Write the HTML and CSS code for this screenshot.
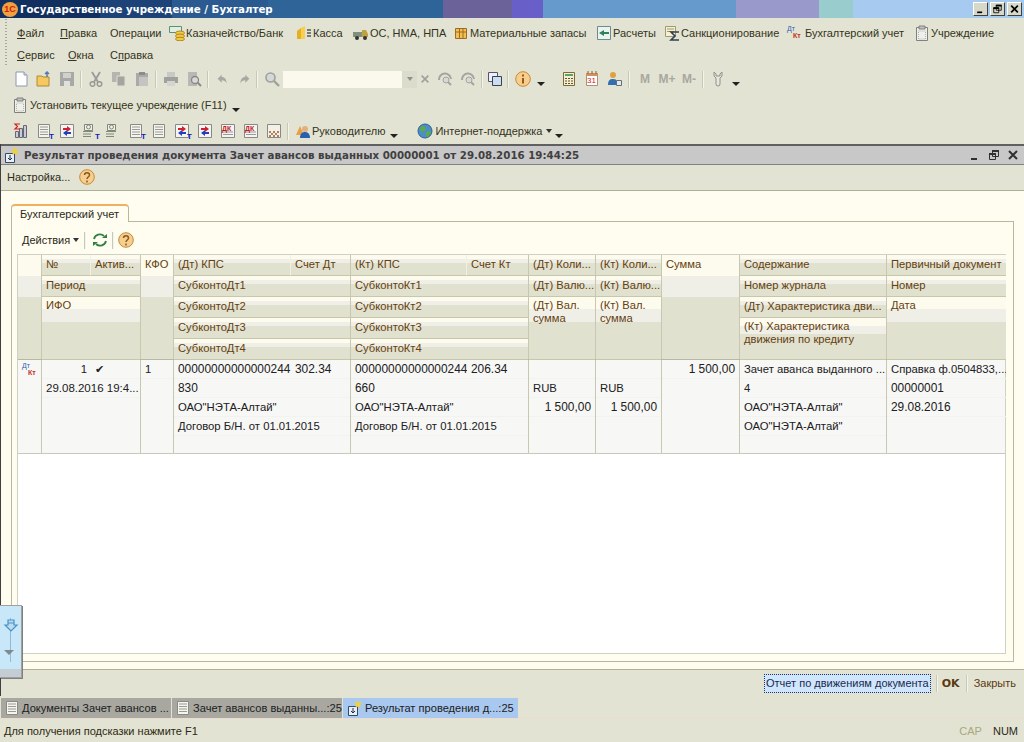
FILE: index.html
```html
<!DOCTYPE html>
<html lang="ru">
<head>
    <meta charset="UTF-8">
    <title>Государственное учреждение / Бухгалтер</title>
    <link rel="stylesheet" href="styles.css">
</head>
<body>
    <svg class="defs" width="0" height="0">
        <symbol id="doc" viewBox="0 0 16 16"><path d="M3 1h8l3 3v11H3z" fill="#fff" stroke="#8a9ab0"/><path d="M11 1v3h3" fill="#dde" stroke="#8a9ab0"/></symbol>
        <symbol id="lines" viewBox="0 0 16 16"><path d="M2.500 1.500h11v13h-11z" fill="#f4f4f0" stroke="#8a8a80"/><path d="M4 4h8M4 6.500h8M4 9h8M4 11.500h8" stroke="#9a9a90"/></symbol>
        <symbol id="open" viewBox="0 0 16 16"><path d="M1 5h5l1 1h6v9H1z" fill="#f5c860" stroke="#b08a30"/><path d="M11 6V1M9 3l2-2 2 2" fill="none" stroke="#5a7ab0" stroke-width="1.500"/></symbol>
        <symbol id="save" viewBox="0 0 16 16"><path d="M1 1h14v14H1z" fill="#a8a8a4"/><path d="M4 2h8v5H4z" fill="#d0d0cc"/><path d="M5 10h6v5H5z" fill="#e0e0dc"/></symbol>
        <symbol id="cut" viewBox="0 0 16 16"><path d="M4 1l6 10M12 1L6 11" stroke="#9a9a98" stroke-width="1.800" fill="none"/><circle cx="4.500" cy="13" r="2.300" fill="none" stroke="#9a9a98" stroke-width="1.500"/><circle cx="11.500" cy="13" r="2.300" fill="none" stroke="#9a9a98" stroke-width="1.500"/></symbol>
        <symbol id="copy" viewBox="0 0 16 16"><path d="M1 1h8v10H1z" fill="#b4b4b0"/><path d="M6 5h8v10H6z" fill="#a4a4a0" stroke="#e0e0d0"/></symbol>
        <symbol id="paste" viewBox="0 0 16 16"><path d="M2 2h12v13H2z" fill="#aaa" /><path d="M5 1h6v3H5z" fill="#8c8c8c"/><path d="M5 6h9v9H5z" fill="#c4c4c0"/></symbol>
        <symbol id="print" viewBox="0 0 16 16"><path d="M4 1h8v5H4z" fill="#c8c8c4"/><path d="M1 6h14v6H1z" fill="#a0a09c"/><path d="M4 10h8v5H4z" fill="#d4d4d0"/></symbol>
        <symbol id="preview" viewBox="0 0 16 16"><path d="M2 1h9v14H2z" fill="#b8b8b4"/><circle cx="9" cy="9" r="3.500" fill="#d8d8d4" stroke="#888" stroke-width="1.300"/><path d="M11.500 11.500L15 15" stroke="#888" stroke-width="2"/></symbol>
        <symbol id="undo" viewBox="0 0 16 16"><path d="M2 7l5-5v3c4 0 6 3 6 8-1-3-3-4-6-4v3z" fill="#a8a8a4"/></symbol>
        <symbol id="redo" viewBox="0 0 16 16"><path d="M14 7L9 2v3c-4 0-6 3-6 8 1-3 3-4 6-4v3z" fill="#a8a8a4"/></symbol>
        <symbol id="find" viewBox="0 0 16 16"><circle cx="6.500" cy="6.500" r="4.500" fill="#d4d8d8" stroke="#a0a09c" stroke-width="1.600"/><path d="M10 10l5 5" stroke="#a0a09c" stroke-width="2.400"/></symbol>
        <symbol id="findback" viewBox="0 0 16 16"><path d="M2 9a6 6 0 0 1 12-1" fill="none" stroke="#a4a4a0" stroke-width="2"/><circle cx="9" cy="9" r="3" fill="#d8d8d4" stroke="#a4a4a0"/><path d="M11 11l3 3" stroke="#a4a4a0" stroke-width="2"/></symbol>
        <symbol id="windows" viewBox="0 0 16 16"><path d="M1.500 1.500h9v9h-9z" fill="#eef" stroke="#556"/><path d="M5.500 5.500h9v9h-9z" fill="#cdddf0" stroke="#345"/></symbol>
        <symbol id="info" viewBox="0 0 16 16"><circle cx="8" cy="8" r="7.300" fill="#f6cf90" stroke="#c88a30"/><path d="M8 3.500v2M8 7v5.500" stroke="#a05a10" stroke-width="2"/></symbol>
        <symbol id="help" viewBox="0 0 16 16"><circle cx="8" cy="8" r="7.300" fill="#f6cf90" stroke="#c88a30"/><path d="M5.500 6c0-3 5-3 5 0 0 2-2.500 2-2.500 4M8 11.500v2" fill="none" stroke="#8a5a20" stroke-width="1.500"/></symbol>
        <symbol id="calc" viewBox="0 0 16 16"><path d="M2.500 1.500h11v13h-11z" fill="#eef0d8" stroke="#806a30"/><path d="M4 3h8v2H4z" fill="#60a060"/><path d="M4 7h2v1H4zM7 7h2v1H7zM10 7h2v1h-2zM4 9.500h2v1H4zM7 9.500h2v1H7zM10 9.500h2v1h-2zM4 12h2v1H4zM7 12h2v1H7zM10 12h2v1h-2z" fill="#705020"/></symbol>
        <symbol id="date" viewBox="0 0 16 16"><path d="M2.500 2.500h11v12h-11z" fill="#fff" stroke="#b09070"/><path d="M2 2h12v3H2z" fill="#d09060"/><path d="M4 0v3M8 0v3M12 0v3" stroke="#806040"/></symbol>
        <symbol id="users" viewBox="0 0 16 16"><circle cx="6" cy="4" r="3" fill="#e0a040"/><path d="M1 14c0-5 2-6 5-6s4 1 4 3v3z" fill="#3070b0"/><path d="M9.500 9.500h5v5h-5z" fill="#e4e8ec" stroke="#607080"/></symbol>
        <symbol id="person" viewBox="0 0 16 16"><path d="M2.500 1.500h8v6h-8z" fill="#f0f0ea" stroke="#808878"/><circle cx="6.500" cy="4" r="2" fill="none" stroke="#808878"/><path d="M1 8.500h10M1 11h8M1 13.500h8" stroke="#808878"/></symbol>
        <symbol id="tool" viewBox="0 0 16 16"><path d="M4 1v4l2 2v6a2 2 0 0 0 4 0V7l2-2V1l-2 2v2H6V3z" fill="#e8e8e0" stroke="#909088"/></symbol>
        <symbol id="clip" viewBox="0 0 16 16"><path d="M2.500 2.500h11v13h-11z" fill="#f0f0ea" stroke="#808080"/><path d="M5 1h6v3H5z" fill="#c0c0c0" stroke="#808080"/><path d="M4.500 6h7v8h-7z" fill="none" stroke="#b0b0a8" stroke-dasharray="1 1"/></symbol>
        <symbol id="bank" viewBox="0 0 16 16"><path d="M.5 1.500h12v6H.5z" fill="#dfeee0" stroke="#58907a"/><ellipse cx="11" cy="8" rx="4.500" ry="2" fill="#f4c840" stroke="#b08a20"/><ellipse cx="11" cy="11" rx="4.500" ry="2" fill="#f4c840" stroke="#b08a20"/><ellipse cx="11" cy="14" rx="4.500" ry="1.800" fill="#f4c840" stroke="#b08a20"/></symbol>
        <symbol id="cash" viewBox="0 0 16 16"><path d="M1 6l4-3v11H1z" fill="#e8b020"/><path d="M5 3l4-2v13H5z" fill="#f4d050"/><path d="M11 5h4M11 8h4M11 11h4" stroke="#555" stroke-width="1.400"/></symbol>
        <symbol id="truck" viewBox="0 0 16 16"><path d="M0 7h9v5H0z" fill="#80907c"/><path d="M9 5h4l2 4v3H9z" fill="#c0a040"/><circle cx="4" cy="13" r="2" fill="#333"/><circle cx="12" cy="13" r="2" fill="#333"/></symbol>
        <symbol id="box" viewBox="0 0 16 16"><path d="M2.500 3.500h11v10h-11z" fill="#f0c050" stroke="#a06a20"/><path d="M2.500 7h11M6.500 3.500v10M10 3.500v10" stroke="#a06a20"/></symbol>
        <symbol id="pay" viewBox="0 0 16 16"><path d="M1.500 1.500h13v13h-13z" fill="#e8f4f0" stroke="#708890"/><path d="M3 8l5-3v2h5v2H8v2z" fill="#30805a"/></symbol>
        <symbol id="sigma" viewBox="0 0 16 16"><path d="M1.500 1.500h10v10h-10z" fill="#f4f0d0" stroke="#a09a70"/><path d="M3 4h7M3 6.500h7" stroke="#a09a70"/><path d="M15 7H7l4 4-4 4h8" fill="none" stroke="#304050" stroke-width="1.600"/></symbol>
        <symbol id="boss" viewBox="0 0 16 16"><path d="M1 12l4-9 4 9z" fill="#e8a040"/><circle cx="10" cy="6" r="3" fill="#e0b080"/><path d="M5 15c0-4 2-6 5-6s5 2 5 6z" fill="#2860b0"/></symbol>
        <symbol id="globe" viewBox="0 0 16 16"><circle cx="8" cy="8" r="7" fill="#4a90c8" stroke="#30608a"/><path d="M3 4l4-1 2 3-3 3-3-2zM9 9l4-1 1 2-3 4-2-1z" fill="#60a848"/></symbol>
        <symbol id="docarrow" viewBox="0 0 16 16"><path d="M2.500 6.500h9v9h-9z" fill="#e8eef6" stroke="#354a66"/><path d="M7 8v5M5 11l2 2 2-2" fill="none" stroke="#203048"/><path d="M12 0l1 2.500 3 .5-2 2 .5 3-2.500-1.500L9.500 8l.5-3-2-2 3-.5z" fill="#f0d040"/></symbol>
        <symbol id="refresh" viewBox="0 0 16 16"><path d="M2 7a6 6 0 0 1 10-3M14 9a6 6 0 0 1-10 3" fill="none" stroke="#308040" stroke-width="1.800"/><path d="M10 6h5V2zM6 10H1v4z" fill="#308040"/></symbol>
        <symbol id="stat" viewBox="0 0 16 16"><path d="M2.500 8.500h3v6h-3zM6.500 5.500h3v9h-3zM10.500 2.500h3v12h-3z" fill="#c8ccd4" stroke="#667"/><path d="M7 1H2l2.500 2.500L2 6h5" fill="none" stroke="#d02020" stroke-width="1.200"/></symbol>
        <symbol id="move" viewBox="0 0 16 16"><path d="M1.500 1.500h13v13h-13z" fill="#f4f4f0" stroke="#888"/><path d="M8 3l4 3-4 3V7H4V5h4z" fill="#d02030"/><path d="M8 7l-4 3 4 3v-2h4V9H8z" fill="#2040c0"/></symbol>
        <symbol id="sheet" viewBox="0 0 16 16"><path d="M1.500 1.500h13v13h-13z" fill="#f4f4f0" stroke="#888"/><path d="M3 9h10M3 11.500h10" stroke="#999"/></symbol>
        <symbol id="chess" viewBox="0 0 16 16"><path d="M1.500 1.500h13v13h-13z" fill="#f4f0e4" stroke="#888"/><path d="M3 8h2v2H3zM7 8h2v2H7zM11 8h2v2h-2zM5 10h2v2H5zM9 10h2v2H9zM3 12h2v2H3zM7 12h2v2H7zM11 12h2v2h-2z" fill="#b08060"/></symbol>
        <symbol id="bookmark" viewBox="0 0 16 16"><path d="M5 2h6v5h3l-6 6-6-6h3z" fill="#bcdcf4" stroke="#4a90c4" stroke-width="1.200"/><path d="M5 5h6" stroke="#4a90c4"/></symbol>
        <symbol id="w-min" viewBox="0 0 12 12"><path d="M2 9h6v2H2z" fill="currentColor"/></symbol>
        <symbol id="w-max" viewBox="0 0 12 12"><path d="M4.500 1.500h6v6h-6zM1.500 4.500h6v6h-6z" fill="none" stroke="currentColor"/><path d="M4 1h7v2H4zM1 4h7v2H1z" fill="currentColor"/></symbol>
        <symbol id="w-close" viewBox="0 0 12 12"><path d="M2 2l8 8M10 2l-8 8" stroke="currentColor" stroke-width="2"/></symbol>
    </svg>

    <header class="app-title">
        <span class="logo">1С</span>
        <span class="app-name">Государственное учреждение / Бухгалтер</span>
        <div class="win-btns">
            <span class="win-btn"><svg><use href="#w-min"/></svg></span>
            <span class="win-btn"><svg><use href="#w-max"/></svg></span>
            <span class="win-btn"><svg><use href="#w-close"/></svg></span>
        </div>
    </header>

    <nav class="menubar">
        <div class="menu-row">
            <span class="m m-file"><u>Ф</u>айл</span>
            <span class="m m-edit"><u>П</u>равка</span>
            <span class="m m-ops">Операции</span>
            <span class="m m-bank"><svg class="i"><use href="#bank"/></svg>Казначейство/Банк</span>
            <span class="m m-cash"><svg class="i"><use href="#cash"/></svg>Касса</span>
            <span class="m m-os"><svg class="i"><use href="#truck"/></svg>ОС, НМА, НПА</span>
            <span class="m m-mat"><svg class="i"><use href="#box"/></svg>Материальные запасы</span>
            <span class="m m-pay"><svg class="i"><use href="#pay"/></svg>Расчеты</span>
            <span class="m m-san"><svg class="i"><use href="#sigma"/></svg>Санкционирование</span>
            <span class="m m-acc"><span class="dtkt menu-dk"><b class="dt">Дт</b><b class="kt">Кт</b></span>Бухгалтерский учет</span>
            <span class="m m-inst"><svg class="i"><use href="#clip"/></svg>Учреждение</span>
        </div>
        <div class="menu-row">
            <span class="m m-srv"><u>С</u>ервис</span>
            <span class="m m-win"><u>О</u>кна</span>
            <span class="m">С<u>п</u>равка</span>
        </div>
    </nav>

    <div class="toolbar">
        <span class="grip"></span>
        <span class="tb"><svg class="i"><use href="#doc"/></svg></span>
        <span class="tb"><svg class="i"><use href="#open"/></svg></span>
        <span class="tb"><svg class="i"><use href="#save"/></svg></span>
        <span class="sep"></span>
        <span class="tb"><svg class="i"><use href="#cut"/></svg></span>
        <span class="tb"><svg class="i"><use href="#copy"/></svg></span>
        <span class="tb"><svg class="i"><use href="#paste"/></svg></span>
        <span class="sep"></span>
        <span class="tb"><svg class="i"><use href="#print"/></svg></span>
        <span class="tb"><svg class="i"><use href="#preview"/></svg></span>
        <span class="sep"></span>
        <span class="tb"><svg class="i sm"><use href="#undo"/></svg></span>
        <span class="tb narrow"><svg class="i sm"><use href="#redo"/></svg></span>
        <span class="sep"></span>
        <span class="tb"><svg class="i"><use href="#find"/></svg></span>
        <span class="search"></span>
        <span class="search-drop"><span class="caret gray"></span></span>
        <span class="search-x"><svg class="x-i"><use href="#w-close"/></svg></span>
        <span class="tb"><svg class="i"><use href="#findback"/></svg></span>
        <span class="tb"><svg class="i"><use href="#findback"/></svg></span>
        <span class="sep"></span>
        <span class="tb narrow"><svg class="i"><use href="#windows"/></svg></span>
        <span class="sep"></span>
        <span class="tb"><svg class="i"><use href="#info"/></svg></span>
        <span class="more near"></span>
        <span class="grip"></span>
        <span class="tb"><svg class="i"><use href="#calc"/></svg></span>
        <span class="tb"><svg class="i"><use href="#date"/></svg><b class="day">31</b></span>
        <span class="tb"><svg class="i"><use href="#users"/></svg></span>
        <span class="sep"></span>
        <span class="mem mem-m">M</span>
        <span class="mem">M+</span>
        <span class="mem">M-</span>
        <span class="sep"></span>
        <span class="tb"><svg class="i"><use href="#tool"/></svg></span>
        <span class="more near"></span>
    </div>

    <div class="toolbar">
        <span class="grip"></span>
        <svg class="i clip-i"><use href="#clip"/></svg>
        <span class="tb-text">Установить текущее учреждение (F11)</span>
        <span class="more"></span>
    </div>

    <div class="toolbar">
        <span class="grip"></span>
        <span class="tb"><svg class="i"><use href="#stat"/></svg></span>
        <span class="tb"><svg class="i"><use href="#lines"/></svg><b class="t">T</b></span>
        <span class="tb"><svg class="i"><use href="#move"/></svg></span>
        <span class="tb"><svg class="i"><use href="#person"/></svg><b class="t">T</b></span>
        <span class="tb"><svg class="i"><use href="#person"/></svg></span>
        <span class="tb"><svg class="i"><use href="#lines"/></svg><b class="t">T</b></span>
        <span class="tb"><svg class="i"><use href="#lines"/></svg></span>
        <span class="tb"><svg class="i"><use href="#move"/></svg><b class="t">T</b></span>
        <span class="tb"><svg class="i"><use href="#move"/></svg></span>
        <span class="tb"><svg class="i"><use href="#sheet"/></svg><b class="dk-mark">ДК</b></span>
        <span class="tb"><svg class="i"><use href="#sheet"/></svg><b class="dk-mark">ДК</b></span>
        <span class="tb"><svg class="i"><use href="#chess"/></svg></span>
        <span class="sep"></span>
        <svg class="i boss-i"><use href="#boss"/></svg>
        <span class="tb-text">Руководителю</span>
        <span class="more far"></span>
        <span class="grip"></span>
        <svg class="i globe-i"><use href="#globe"/></svg>
        <span class="tb-text">Интернет-поддержка</span>
        <span class="caret"></span>
        <span class="more near"></span>
    </div>

    <main class="doc">
        <div class="doc-title">
            <svg class="i"><use href="#docarrow"/></svg>
            <span class="doc-name">Результат проведения документа Зачет авансов выданных 00000001 от 29.08.2016 19:44:25</span>
            <div class="doc-btns">
                <svg><use href="#w-min"/></svg>
                <svg><use href="#w-max"/></svg>
                <svg><use href="#w-close"/></svg>
            </div>
        </div>
        <div class="doc-settings">
            <span>Настройка...</span>
            <svg class="i"><use href="#help"/></svg>
        </div>
        <div class="doc-body">
            <div class="tab">Бухгалтерский учет</div>
            <div class="tab-panel">
                <div class="actions">
                    <span>Действия</span><span class="caret"></span>
                    <span class="sep"></span>
                    <svg class="i"><use href="#refresh"/></svg>
                    <span class="sep sep-b"></span>
                    <svg class="i"><use href="#help"/></svg>
                </div>
                <div class="grid">
                    <div class="grid-head">
                        <div class="g w-ico"><div class="h h5"></div></div>
                        <div class="g w-b">
                            <div class="split"><div class="h w-no">№</div><div class="h w-act">Актив...</div></div>
                            <div class="h">Период</div>
                            <div class="h h3">ИФО</div>
                        </div>
                        <div class="g w-kfo"><div class="h h5">КФО</div></div>
                        <div class="g w-d">
                            <div class="split"><div class="h w-kps">(Дт) КПС</div><div class="h w-sch">Счет Дт</div></div>
                            <div class="h">СубконтоДт1</div>
                            <div class="h">СубконтоДт2</div>
                            <div class="h">СубконтоДт3</div>
                            <div class="h">СубконтоДт4</div>
                        </div>
                        <div class="g w-k">
                            <div class="split"><div class="h w-kps2">(Кт) КПС</div><div class="h w-sch2">Счет Кт</div></div>
                            <div class="h">СубконтоКт1</div>
                            <div class="h">СубконтоКт2</div>
                            <div class="h">СубконтоКт3</div>
                            <div class="h">СубконтоКт4</div>
                        </div>
                        <div class="g w-q1">
                            <div class="h">(Дт) Коли...</div>
                            <div class="h">(Дт) Валю...</div>
                            <div class="h h3">(Дт) Вал.<br>сумма</div>
                        </div>
                        <div class="g w-q2">
                            <div class="h">(Кт) Коли...</div>
                            <div class="h">(Кт) Валю...</div>
                            <div class="h h3">(Кт) Вал.<br>сумма</div>
                        </div>
                        <div class="g w-sum"><div class="h h5">Сумма</div></div>
                        <div class="g w-text">
                            <div class="h">Содержание</div>
                            <div class="h">Номер журнала</div>
                            <div class="h">(Дт) Характеристика дви...</div>
                            <div class="h h2">(Кт) Характеристика<br>движения по кредиту</div>
                        </div>
                        <div class="g w-pd">
                            <div class="h">Первичный документ</div>
                            <div class="h">Номер</div>
                            <div class="h h3">Дата</div>
                        </div>
                    </div>
                    <div class="grid-row">
                        <div class="g w-ico"><span class="dtkt"><b class="dt">Дт</b><b class="kt">Кт</b></span></div>
                        <div class="g w-b">
                            <div class="split"><div class="c w-no right">1</div><div class="c w-act check">&#x2714;</div></div>
                            <div class="c digits date-cell">29.08.2016 19:4...</div>
                        </div>
                        <div class="g w-kfo"><div class="c">1</div></div>
                        <div class="g w-d">
                            <div class="split"><div class="c w-kps digits">00000000000000244</div><div class="c w-sch digits">302.34</div></div>
                            <div class="c digits">830</div>
                            <div class="c">ОАО"НЭТА-Алтай"</div>
                            <div class="c">Договор Б/Н. от 01.01.2015</div>
                        </div>
                        <div class="g w-k">
                            <div class="split"><div class="c w-kps2 digits">00000000000000244</div><div class="c w-sch2 digits">206.34</div></div>
                            <div class="c digits">660</div>
                            <div class="c">ОАО"НЭТА-Алтай"</div>
                            <div class="c">Договор Б/Н. от 01.01.2015</div>
                        </div>
                        <div class="g w-q1">
                            <div class="c"></div>
                            <div class="c">RUB</div>
                            <div class="c right digits">1 500,00</div>
                        </div>
                        <div class="g w-q2">
                            <div class="c"></div>
                            <div class="c">RUB</div>
                            <div class="c right digits">1 500,00</div>
                        </div>
                        <div class="g w-sum"><div class="c right digits">1 500,00</div></div>
                        <div class="g w-text">
                            <div class="c">Зачет аванса выданного ...</div>
                            <div class="c">4</div>
                            <div class="c">ОАО"НЭТА-Алтай"</div>
                            <div class="c">ОАО"НЭТА-Алтай"</div>
                        </div>
                        <div class="g w-pd">
                            <div class="c">Справка ф.0504833,...</div>
                            <div class="c digits">00000001</div>
                            <div class="c digits">29.08.2016</div>
                        </div>
                    </div>
                </div>
            </div>
        </div>
        <div class="doc-foot">
            <span class="report-btn">Отчет по движениям документа</span>
            <span class="sep foot-sep"></span>
            <span class="ok">OK</span>
            <span class="sep foot-sep-b"></span>
            <span class="close">Закрыть</span>
        </div>
    </main>

    <footer>
        <div class="taskbar">
            <div class="task"><svg class="i"><use href="#lines"/></svg>Документы Зачет авансов ...</div>
            <div class="task"><svg class="i"><use href="#lines"/></svg>Зачет авансов выданны...:25</div>
            <div class="task task-on"><svg class="i"><use href="#docarrow"/></svg>Результат проведения д...:25</div>
        </div>
        <div class="statusbar">
            <span class="hint">Для получения подсказки нажмите F1</span>
            <span class="cap">CAP</span>
            <span class="num">NUM</span>
        </div>
    </footer>

    <div class="float-panel">
        <svg class="i"><use href="#bookmark"/></svg>
        <span class="caret gray big"></span>
    </div>
</body>
</html>
```

FILE: styles.css
```css
* {
    box-sizing: border-box;
}
html, body {
    margin: 0;
    height: 100%;
}
body {
    width: 1024px;
    height: 742px;
    overflow: hidden;
    position: relative;
    display: flex;
    flex-direction: column;
    background-color: #e3e3d3;
    font-family: "Liberation Sans", Arial, sans-serif;
    font-size: 11px;
    color: #2a2a18;
}
.defs {
    position: absolute;
}
.i {
    width: 16px;
    height: 16px;
    flex: none;
}
.i.sm {
    width: 13px;
    height: 13px;
}

/* app window title */
.app-title {
    height: 18px;
    flex: none;
    display: flex;
    align-items: center;
    background: linear-gradient(90deg, #12305f 0, #12305f 100px, #1c4278 100px, #1c4278 172px, #2a5a90 172px, #2a5a90 268px, #2f6498 268px, #2f6498 443px, #6a6298 443px, #6a6298 512px, #6860c8 512px, #6860c8 543px, #6699cc 543px, #6699cc 736px, #9999cc 736px, #9999cc 819px, #99cccc 819px, #99cccc 853px, #a6caf0 853px);
}
.logo {
    width: 16px;
    height: 15px;
    margin: 0 2px;
    border-radius: 50%;
    background-color: #f0a040;
    color: #d02010;
    font-size: 9px;
    font-weight: bold;
    line-height: 15px;
    text-align: center;
}
.app-name {
    color: #fff;
    font-family: "DejaVu Sans", sans-serif;
    font-size: 10.25px;
    font-weight: bold;
}
.win-btns {
    margin-left: auto;
    margin-right: 2px;
    display: flex;
    gap: 2px;
}
.win-btn {
    width: 15px;
    height: 14px;
    padding: 1px 1px;
    display: flex;
    background-color: #d8d8c8;
    border: 1px solid;
    border-color: #fff #404040 #404040 #fff;
    color: #000;
}
.win-btn svg {
    width: 11px;
    height: 10px;
}

/* menu */
.menubar {
    flex: none;
    height: 48px;
    padding: 4px 0 0 17px;
    background-image: radial-gradient(#a8a898 40%, transparent 45%);
    background-size: 2px 3px;
    background-repeat: repeat-y;
    background-position: 5px 6px;
}
.menu-row {
    height: 22px;
    display: flex;
    align-items: center;
}
.m {
    display: flex;
    align-items: center;
    white-space: pre;
    color: #333320;
}
.m u {
    text-underline-offset: 1px;
}
.m .i {
    margin-right: 1px;
}
.m-file { width: 43px; }
.m-edit { width: 50px; }
.m-ops { width: 59px; }
.m-bank { width: 127px; }
.m-cash { width: 57px; }
.m-os { width: 100px; }
.m-mat { width: 143px; }
.m-pay { width: 68px; }
.m-san { width: 123px; }
.m-acc { width: 127px; }
.m-srv { width: 51px; }
.m-win { width: 42px; }

/* Дт/Кт mark, menu and grid */
.dtkt {
    width: 16px;
    height: 16px;
    flex: none;
    position: relative;
    display: block;
    font-size: 7px;
    line-height: 7px;
}
.dtkt .dt {
    position: absolute;
    left: 0;
    top: 0;
    font-weight: normal;
    color: #3060b0;
}
.dtkt .kt {
    position: absolute;
    left: 6px;
    top: 7px;
    color: #c03020;
}
.menu-dk {
    margin-right: 2px;
}

/* toolbars */
.toolbar {
    height: 26px;
    flex: none;
    display: flex;
    align-items: center;
    padding-left: 4px;
}
.grip {
    width: 3px;
    height: 16px;
    flex: none;
    margin-right: 2px;
    background-image: radial-gradient(#a8a898 40%, transparent 45%);
    background-size: 2px 2px;
}
.tb {
    width: 23px;
    height: 22px;
    flex: none;
    display: flex;
    align-items: center;
    justify-content: center;
    position: relative;
}
.tb.narrow {
    width: 20px;
}
.tb .t {
    position: absolute;
    right: 1px;
    bottom: 1px;
    color: #1020c0;
    font-size: 8px;
    line-height: 8px;
}
.tb .day {
    position: absolute;
    left: 7px;
    top: 9px;
    color: #d02020;
    font-size: 8px;
    font-weight: normal;
    line-height: 8px;
}
.tb .dk-mark {
    position: absolute;
    left: 6px;
    top: 5px;
    color: #c02020;
    font-size: 7px;
    line-height: 7px;
}
.sep {
    width: 2px;
    height: 17px;
    flex: none;
    margin: 0 2px;
    background-color: #c8c8b8;
    border-right: 1px solid #f4f4e8;
}
.search {
    width: 119px;
    height: 17px;
    flex: none;
    background-color: #fbf9ee;
}
.search-drop {
    width: 15px;
    height: 17px;
    flex: none;
    display: flex;
    align-items: center;
    justify-content: center;
    background-color: #dcdccc;
}
.search-x {
    width: 16px;
    height: 17px;
    flex: none;
    display: flex;
    align-items: center;
    justify-content: center;
    color: #a0a09c;
}
.x-i {
    width: 10px;
    height: 10px;
}
.caret {
    width: 0;
    height: 0;
    flex: none;
    margin-left: 3px;
    border: 3px solid transparent;
    border-top: 4px solid #333;
    border-bottom: 0;
}
.caret.gray {
    margin: 0;
    border-top-color: #909088;
}
.more {
    width: 0;
    height: 0;
    flex: none;
    margin: 10px 8px 0 5px;
    border: 4px solid transparent;
    border-top: 4px solid #222;
    border-bottom: 0;
}
.more.near {
    margin: 10px 7px 0 3px;
}
.more.far {
    margin-right: 10px;
}
.mem {
    width: 22px;
    flex: none;
    text-align: center;
    color: #a8a8a0;
    font-size: 12px;
    font-weight: bold;
}
.mem-m {
    margin-left: 2px;
}
.clip-i {
    margin: 0 2px 0 3px;
}
.tb-text {
    white-space: nowrap;
    color: #333320;
}
.boss-i {
    margin: 0 1px 0 4px;
}
.globe-i {
    margin: 0 2px 0 4px;
}

/* document window */
.doc {
    flex: none;
    height: 552px;
    display: flex;
    flex-direction: column;
    border-left: 1px solid #404040;
}
.doc-title {
    height: 21px;
    flex: none;
    display: flex;
    align-items: center;
    gap: 5px;
    padding-left: 2px;
    background-color: #c8c8c8;
    border-top: 2px solid #606060;
    border-bottom: 1px solid #808080;
}
.doc-name {
    font-family: "DejaVu Sans", sans-serif;
    font-size: 10.25px;
    font-weight: bold;
    color: #404040;
}
.doc-btns {
    margin-left: auto;
    margin-right: 5px;
    display: flex;
    gap: 7px;
    color: #303030;
}
.doc-btns svg {
    width: 12px;
    height: 12px;
}
.doc-settings {
    height: 26px;
    flex: none;
    display: flex;
    align-items: center;
    gap: 9px;
    padding: 0 0 1px 6px;
    border-bottom: 1px solid #b0b098;
}
.doc-body {
    height: 479px;
    flex: none;
    padding: 13px 0 0 10px;
    background-color: #fffcf0;
    border-bottom: 1px solid #b0b098;
}
.tab {
    width: 118px;
    height: 18px;
    padding: 2px 0 0 8px;
    margin-bottom: -1px;
    position: relative;
    background-color: #fffcf0;
    border: 1px solid #b8b8a0;
    border-top: 2px solid #f0b060;
    border-bottom: 0;
    border-radius: 4px 4px 0 0;
}
.tab-panel {
    width: 1003px;
    height: 441px;
    padding: 0 0 0 5px;
    border: 1px solid #b8b8a0;
}
.actions {
    height: 32px;
    display: flex;
    align-items: center;
    padding: 4px 0 0 5px;
}
.actions .sep {
    margin: 0 6px 0 5px;
}
.actions .sep-b {
    margin: 0 4px 0 3px;
}
.actions .i {
    margin-right: 1px;
}

/* table */
.grid {
    width: 989px;
    height: 400px;
    background-color: #fff;
    border: 1px solid #d0d0c4;
}
.grid-head, .grid-row {
    display: flex;
}
.grid-head {
    height: 105px;
    border-bottom: 1px solid #b8b8a0;
    color: #64400c;
}
.grid-row {
    height: 94px;
    border-bottom: 1px solid #c8c8c0;
    background-color: #f7f7f6;
    color: #202020;
}
.g {
    flex: none;
    border-right: 1px solid #c8c8b0;
}
.grid-row .w-ico {
    padding: 2px 0 0 4px;
}
.split {
    display: flex;
}
.w-ico { width: 24px; }
.w-b { width: 99px; }
.w-kfo { width: 33px; }
.w-d { width: 177px; }
.w-k { width: 178px; }
.w-q1 { width: 67px; }
.w-q2 { width: 66px; }
.w-sum { width: 78px; }
.w-text { width: 147px; }
.w-pd { width: 119px; border-right: 0; }
.w-no { width: 49px; }
.w-act { width: 49px; }
.w-kps { width: 117px; }
.w-sch { width: 59px; }
.w-kps2 { width: 116px; }
.w-sch2 { width: 61px; }
.h {
    height: 21px;
    padding: 2px 0 0 4px;
    font-size: 11.2px;
    line-height: 14px;
    white-space: nowrap;
    overflow: hidden;
    border-bottom: 1px solid #c8c8a8;
    background: linear-gradient(#fdfaee 0, #fdfaee 20%, #efefe8 20%, #efefe8 40%, #e1e1d0 40%);
}
.split .h {
    border-right: 1px solid #f0f0e4;
}
.split .h:last-child {
    border-right: 0;
}
.h2 { height: 42px; line-height: 13px; }
.h3 { height: 63px; line-height: 13px; }
.h5 { height: 104px; border-bottom: 0; }
.c {
    height: 19px;
    padding: 2px 4px 0;
    font-size: 11.3px;
    line-height: 15px;
    white-space: nowrap;
    overflow: hidden;
    border-bottom: 1px solid #f2f2ee;
}
.digits {
    font-size: 11.9px;
}
.date-cell {
    padding-right: 0;
    font-size: 11.5px;
}
.right {
    text-align: right;
}
.check {
    font-size: 11px;
}

/* bottom buttons */
.doc-foot {
    height: 26px;
    flex: none;
    display: flex;
    align-items: center;
    justify-content: flex-end;
    padding-right: 8px;
}
.report-btn {
    height: 19px;
    line-height: 17px;
    padding: 0 1px;
    background-color: #cfe6fc;
    border: 1px dotted #203060;
    color: #202850;
}
.foot-sep {
    margin: 0 4px 0 5px;
}
.foot-sep-b {
    margin: 0 6px;
}
.ok {
    width: 18px;
    color: #5a3a10;
    font-family: "DejaVu Sans", sans-serif;
    font-weight: bold;
}
.close {
    color: #5a3a10;
}

/* taskbar and status */
footer {
    flex: none;
}
.taskbar {
    height: 22px;
    display: flex;
    gap: 1px;
    padding: 2px 0 0 1px;
}
.task {
    width: 170px;
    height: 20px;
    display: flex;
    align-items: center;
    gap: 2px;
    padding-left: 3px;
    white-space: nowrap;
    font-size: 11.1px;
    background-color: #a8a8a0;
    color: #202020;
}
.task-on {
    width: 175px;
    gap: 3px;
    background-color: #a8c8f0;
}
.statusbar {
    height: 24px;
    display: flex;
    align-items: center;
    padding: 0 6px 0 4px;
    border-top: 1px solid #eadcd0;
}
.hint {
    color: #2a2a10;
}
.cap {
    margin-left: auto;
    color: #a8a880;
}
.num {
    margin-left: 11px;
}

/* docked panel at the left edge */
.float-panel {
    position: absolute;
    left: 0;
    top: 605px;
    width: 22px;
    height: 73px;
    padding: 12px 0 0 3px;
    background: linear-gradient(#c8e8fa 0, #c8e8fa 63px, #c4ccd4 63px);
    border: 1px solid #a0a0a0;
    border-left: 0;
    box-shadow: 1px 1px 0 #808080;
}
.float-panel::before {
    content: "";
    position: absolute;
    left: 10px;
    top: 12px;
    width: 1px;
    height: 44px;
    background-color: #90b8d8;
}
.float-panel .i {
    position: relative;
}
.float-panel .big {
    display: block;
    position: relative;
    margin: 14px 0 0 1px;
    border-width: 5px 5px 0;
    border-top-color: #808890;
}
```
